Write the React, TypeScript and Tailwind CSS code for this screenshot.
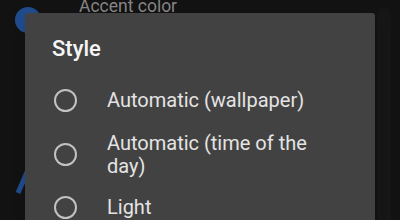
import React from "react";

const options = [
  { label: "Automatic (wallpaper)", gap: "mt-0" },
  { label: "Automatic (time of the day)", gap: "mt-[20px]" },
  { label: "Light", gap: "mt-[18px]" },
];

function Radio() {
  return (
    <div className="mt-[-1px] h-[23px] w-[23px] shrink-0 rounded-full border-2 border-[#c2c2c2]" />
  );
}

export default function App() {
  return (
    <div
      className="relative h-[220px] w-[400px] overflow-hidden bg-[#121212]"
      style={{ fontFamily: "Roboto, 'Noto Sans', sans-serif" }}
    >
      {/* Settings page behind the scrim */}
      <div className="flex flex-col">
        <div className="flex items-start pl-[15px]">
          <div className="mt-[7px] h-[26px] w-[26px] shrink-0 rounded-full bg-[#1f4b8c]" />
          <div className="ml-[38px] mt-[-4px] text-[17.5px] leading-[21px] text-[#858585]">
            Accent color
          </div>
        </div>
        <div className="flex justify-between">
          <svg width="40" height="40" viewBox="0 0 40 40" className="ml-[2px] mt-[131px]">
            <path d="M28.5 0 L16 29" stroke="#1f4b8c" strokeWidth="5" fill="none" />
          </svg>
          <div className="mr-[9px] mt-[-25px] h-[240px] w-[14px] rounded-t-[10px] bg-[#161616]" />
        </div>
      </div>

      {/* Dialog */}
      <div className="absolute left-[25px] top-[13px] h-[230px] w-[350px] rounded-[3px] bg-[#424242] pl-[27px] pr-[24px] pt-[23px] shadow-lg">
        <div className="text-[22px] font-medium leading-[25px] text-[#f6f6f6]">Style</div>
        <div className="mt-[28px] flex flex-col pl-[2px]">
          {options.map((o) => (
            <div key={o.label} className={`flex items-center gap-[30px] ${o.gap}`}>
              <Radio />
              <div className="max-w-[222px] text-[20px] leading-[23px] text-[#e4e4e4]">
                {o.label}
              </div>
            </div>
          ))}
        </div>
      </div>
    </div>
  );
}
